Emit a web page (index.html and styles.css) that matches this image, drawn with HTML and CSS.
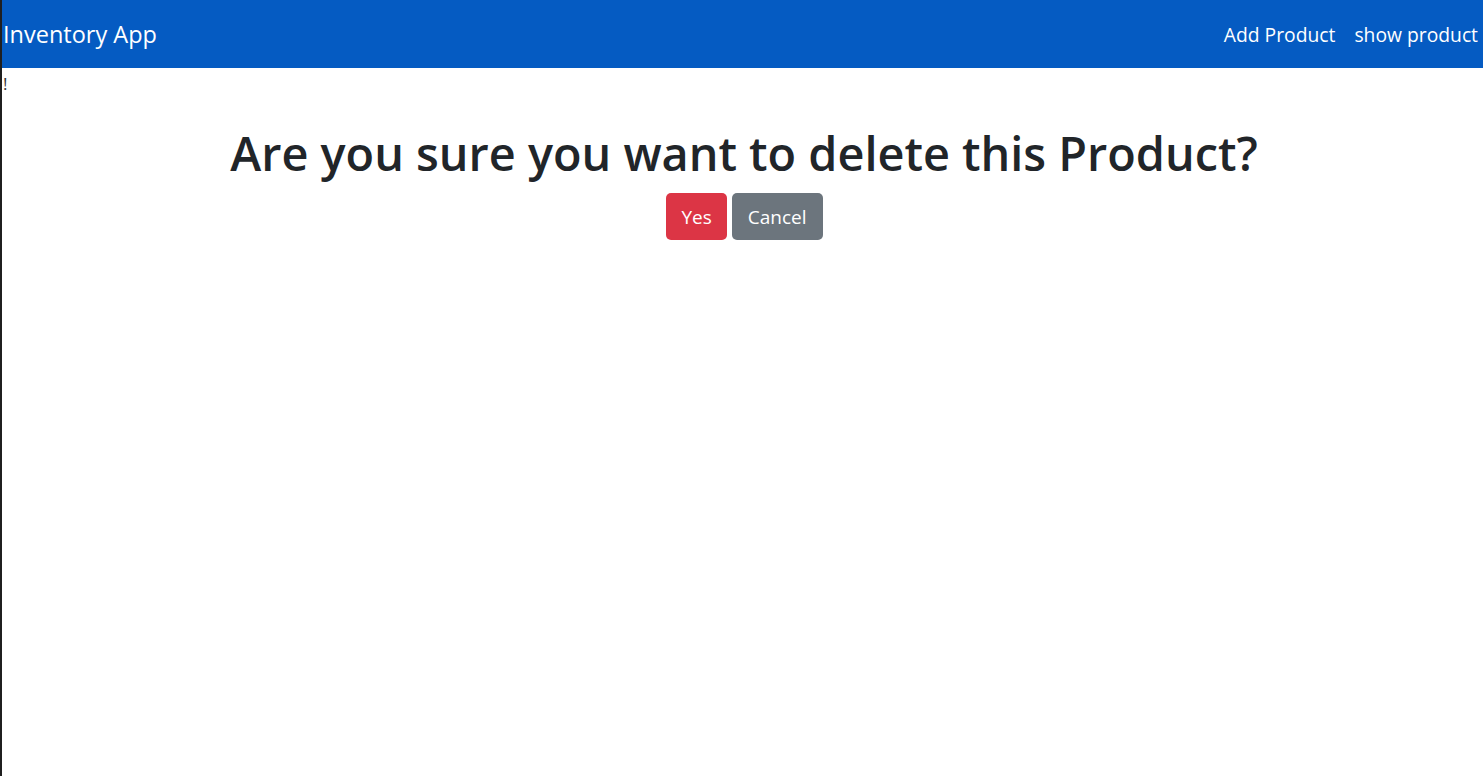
FILE: index.html
```html
<!DOCTYPE html>
<html lang="en">
<head>
<meta charset="utf-8">
<title>Inventory App</title>
<link rel="stylesheet" href="styles.css">
</head>
<body>
<nav class="navbar">
  <a class="brand" href="#">Inventory App</a>
  <div class="nav-links">
    <a class="nav-link" href="#">Add Product</a>
    <a class="nav-link" href="#">show product</a>
  </div>
</nav>
<div class="note">!</div>
<main class="confirm">
  <h1 class="title">Are you sure you want to delete this Product?</h1>
  <div class="actions">
    <button class="btn btn-danger">Yes</button>
    <button class="btn btn-secondary">Cancel</button>
  </div>
</main>
</body>
</html>
```
FILE: styles.css
```css
* { box-sizing: border-box; }
html, body { margin: 0; padding: 0; height: 100%; }
body {
  font-family: "Open Sans", "Noto Sans", sans-serif;
  color: #212529;
  background: #fff;
  border-left: 2px solid #1f1f1f;
}
.navbar {
  height: 68px;
  background: #055bc2;
  display: flex;
  align-items: center;
  justify-content: space-between;
  padding: 0 5px 0 1px;
}
.brand {
  color: #fff;
  text-decoration: none;
  font-size: 23.5px;
}
.nav-links { display: flex; gap: 19px; }
.nav-link {
  color: #fff;
  text-decoration: none;
  font-size: 19.3px;
}
.note {
  font-size: 17px;
  line-height: 24px;
  padding: 4px 0 0 1px;
  margin-bottom: -3px;
  color: #333;
}
.confirm {
  text-align: center;
  padding-top: 32px;
}
.title {
  margin: 0 0 12px 3px;
  font-size: 46.8px;
  font-weight: 600;
  line-height: 1.2;
}
.actions {
  display: flex;
  justify-content: center;
  gap: 5px;
  padding-left: 4px;
}
.btn {
  font-family: inherit;
  font-size: 19px;
  color: #fff;
  border: none;
  border-radius: 5px;
  height: 47px;
  padding: 0 15px;
}
.btn-secondary { padding: 0 16px; }
.btn-danger { background: #dc3545; }
.btn-secondary { background: #6c757d; }
```
